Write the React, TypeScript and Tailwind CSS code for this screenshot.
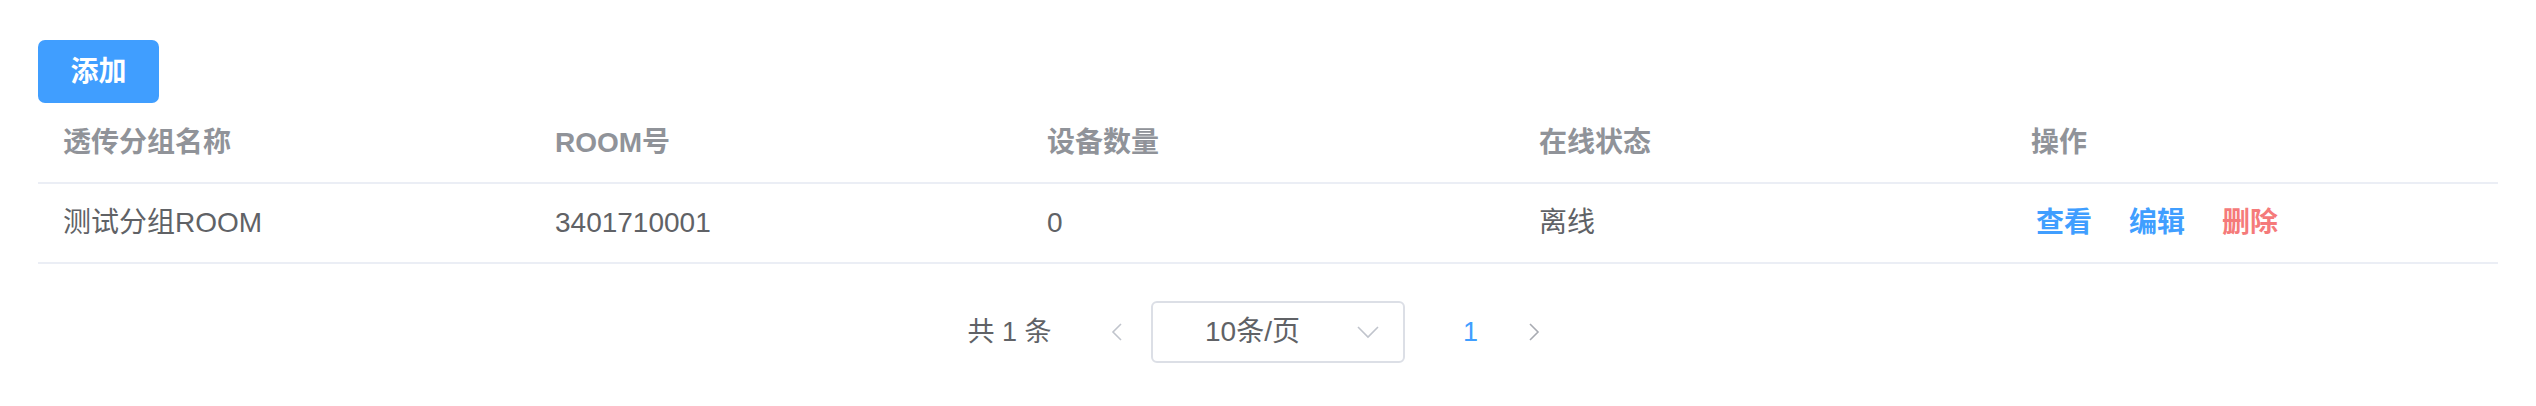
import React from "react";

const FONT = "[font-family:'Liberation_Sans','Noto_Sans_CJK_SC',sans-serif]";

const columns = ["透传分组名称", "ROOM号", "设备数量", "在线状态", "操作"];

function ChevronLeft({ color }: { color: string }) {
  return (
    <svg width="11" height="18" viewBox="0 0 11 18" fill="none">
      <polyline points="10,1 2,9 10,17" stroke={color} strokeWidth="1.6" strokeLinejoin="miter" />
    </svg>
  );
}

function ChevronRight({ color }: { color: string }) {
  return (
    <svg width="11" height="18" viewBox="0 0 11 18" fill="none">
      <polyline points="1,1 9,9 1,17" stroke={color} strokeWidth="1.6" strokeLinejoin="miter" />
    </svg>
  );
}

function ChevronDown() {
  return (
    <svg width="22" height="13" viewBox="0 0 22 13" fill="none">
      <polyline points="1,1 11,11 21,1" stroke="#C0C4CC" strokeWidth="1.6" />
    </svg>
  );
}

export default function App() {
  return (
    <div className={`w-full min-h-[406px] bg-white px-[38px] pt-[40px] ${FONT}`}>
      <button className="h-[63px] w-[121px] rounded-[7px] bg-[#409EFF] text-[28px] font-semibold text-white flex items-center justify-center">
        添加
      </button>

      <div className="w-full">
        <div className="grid grid-cols-5 h-[81px] border-b-2 border-[#EBEEF5]">
          {columns.map((c) => (
            <div key={c} className="flex items-center pl-[25px] text-[28px] font-bold text-[#909399]">
              {c}
            </div>
          ))}
        </div>
        <div className="grid grid-cols-5 h-[80px] border-b-2 border-[#EBEEF5] text-[28px] text-[#606266]">
          <div className="flex items-center pl-[25px]">测试分组ROOM</div>
          <div className="flex items-center pl-[25px]">3401710001</div>
          <div className="flex items-center pl-[25px]">0</div>
          <div className="flex items-center pl-[25px]">离线</div>
          <div className="flex items-center pl-[30px] gap-[37px] font-semibold">
            <span className="text-[#409EFF]">查看</span>
            <span className="text-[#409EFF]">编辑</span>
            <span className="text-[#F57A7A]">删除</span>
          </div>
        </div>
      </div>

      <div className="mt-[37px] flex items-center justify-center h-[62px]">
        <span className="text-[27px] text-[#606266] mr-[35px] whitespace-pre">共 1 条</span>
        <div className="w-[60px] flex items-center justify-center mr-[4px]">
          <ChevronLeft color="#C0C4CC" />
        </div>
        <div className="relative w-[254px] h-[62px] rounded-[6px] border-2 border-[#DCDFE6] flex items-center justify-center pr-[50px] text-[28px] text-[#606266]">
          10条/页
          <span className="absolute right-[24px] top-[23px] flex">
            <ChevronDown />
          </span>
        </div>
        <div className="w-[60px] ml-[36px] mr-[4px] flex items-center justify-center text-[27px] font-medium text-[#409EFF]">
          1
        </div>
        <div className="w-[60px] mr-[4px] flex items-center justify-center">
          <ChevronRight color="#A8ABB2" />
        </div>
      </div>
    </div>
  );
}
